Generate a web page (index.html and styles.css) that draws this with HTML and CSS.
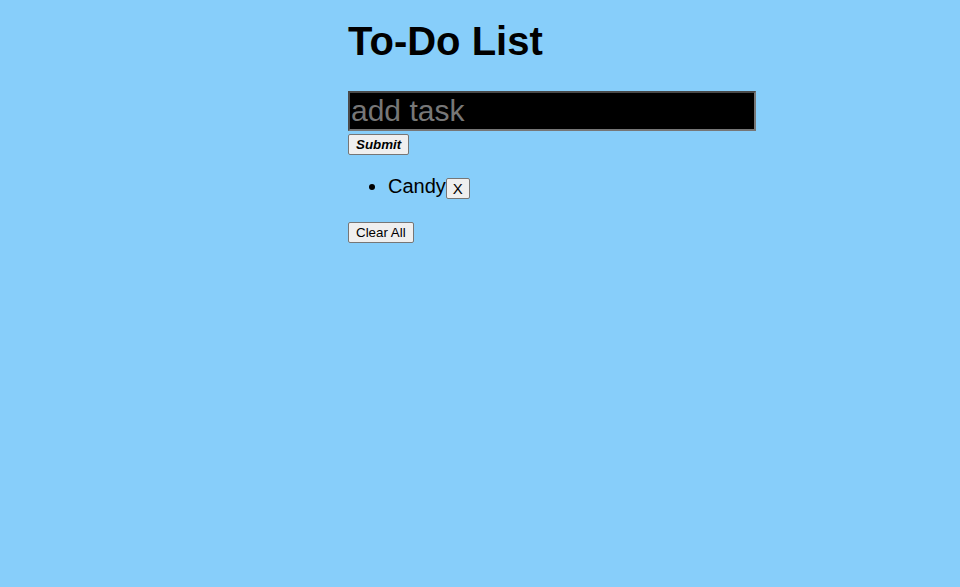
FILE: index.html
```html
<!DOCTYPE html>
<html lang="en">
<head>
<meta charset="utf-8">
<title>To-Do List</title>
<link rel="stylesheet" href="styles.css">
</head>
<body>
<main class="app">
  <h1 class="title">To-Do List</h1>
  <form class="task-form">
    <input class="task-input" type="text" placeholder="add task">
    <button class="btn btn-submit" type="button">Submit</button>
  </form>
  <ul class="task-list">
    <li class="task-item">Candy<button class="btn btn-remove" type="button">X</button></li>
  </ul>
  <button class="btn btn-clear" type="button">Clear All</button>
</main>
</body>
</html>
```
FILE: styles.css
```css
html, body {
  margin: 0;
  padding: 0;
  background: #87cefa;
  height: 100%;
}
body {
  font-family: "Liberation Sans", Arial, Helvetica, sans-serif;
  color: #000;
}
.app {
  margin-left: 348px;
  padding-top: 18px;
  width: 408px;
}
.title {
  margin: 0 0 27px;
  font-size: 40px;
  font-weight: bold;
  line-height: 46px;
}
.task-form {
  margin: 0;
}
.task-input {
  display: block;
  box-sizing: border-box;
  width: 408px;
  height: 40px;
  margin: 0 0 3px;
  padding: 1px 1px;
  background: #000;
  color: #fff;
  font-family: "Liberation Sans", Arial, Helvetica, sans-serif;
  font-size: 30px;
  border: 2px solid;
  border-color: #4a4a4a #767676 #767676 #4a4a4a;
}
.task-input::placeholder {
  color: #777;
}
.btn {
  font-family: "Liberation Sans", Arial, Helvetica, sans-serif;
  font-size: 13.33px;
  background: #efefef;
  color: #000;
  border: 1px solid #767676;
  border-radius: 2px;
  padding: 1px 7px;
  height: 21px;
  line-height: 17px;
  margin: 0;
  box-sizing: border-box;
}
.btn-submit {
  font-weight: bold;
  font-style: italic;
}
.task-list {
  font-size: 20px;
  margin: 20px 0 23px;
  padding-left: 40px;
}
.task-item {
  line-height: 23px;
}
.btn-remove {
  vertical-align: -1px;
  font-size: 15px;
  padding: 1px 6px;
}
```
